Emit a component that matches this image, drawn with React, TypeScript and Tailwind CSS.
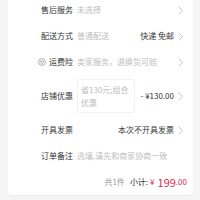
import React from 'react';

const Chevron: React.FC = () => (
    <svg width="6" height="9" viewBox="0 0 6 9" className="shrink-0">
        <path d="M1 1 L4.5 4.5 L1 8" fill="none" stroke="#c8c8c8" strokeWidth="1" strokeLinecap="round" strokeLinejoin="round" />
    </svg>
);

const ShieldIcon: React.FC = () => (
    <svg width="8" height="8" viewBox="0 0 8 8" className="inline-block align-[-1px] mr-[3px]">
        <circle cx="4" cy="4" r="3.4" fill="none" stroke="#9a9a9a" strokeWidth="0.8" />
        <path d="M2.4 3.2 Q4 2.6 5.6 3.2 Q5.4 5.2 4 5.8 Q2.6 5.2 2.4 3.2 Z" fill="none" stroke="#9a9a9a" strokeWidth="0.7" />
    </svg>
);

interface RowProps {
    label: React.ReactNode;
    value?: React.ReactNode;
    right?: React.ReactNode;
    arrow?: boolean;
    className: string;
}

const Row: React.FC<RowProps> = ({ label, value, right, arrow = true, className }) => (
    <div className={`flex items-center pr-[9px] ${className}`}>
        <div className="w-[65px] shrink-0 text-right text-[#333] whitespace-nowrap">{label}</div>
        <div className="flex-1 min-w-0 ml-[4px] text-[#bdbdbd] whitespace-nowrap">{value}</div>
        {right && <div className="text-[#333] whitespace-nowrap mr-[4px]">{right}</div>}
        {arrow ? <Chevron /> : <div className="w-[6px]" />}
    </div>
);

export default function App() {
    return (
        <div
            className="w-[200px] h-[200px] bg-[#f5f5f5] overflow-hidden text-[8px] leading-[10px]"
            style={{ fontFamily: '"Noto Sans CJK SC", "Noto Sans", sans-serif' }}
        >
            <div className="ml-[8px] w-[185px] h-[195px] bg-white rounded-b-[4px] shadow-[0_1px_1px_rgba(0,0,0,0.04)] flex flex-col">
                <Row className="h-[23px] pb-[3px]" label="售后服务" value="未选择" />
                <Row className="h-[26px]" label="配送方式" value="普通配送" right="快递 免邮" />
                <Row
                    className="h-[26px]"
                    label={<><ShieldIcon />运费险</>}
                    value="卖家服务，退换货可赔"
                />
                <Row
                    className="h-[42px]"
                    label="店铺优惠"
                    value={
                        <div className="w-[58px] border border-[#f2f2f2] rounded-[2px] pl-[3px] py-[3px] leading-[13px]">
                            <div className="whitespace-nowrap">省130元;组合</div>
                            <div>优惠</div>
                        </div>
                    }
                    right="- ¥130.00"
                />
                <Row className="h-[26px]" label="开具发票" right="本次不开具发票" />
                <Row className="h-[26px]" label="订单备注" value="选填,请先和商家协商一致" arrow={false} />
                <div className="h-[26px] flex items-center justify-end pr-[6px] whitespace-nowrap">
                    <span className="text-[#999]">共1件</span>
                    <span className="text-[#333] ml-[5px]">小计:</span>
                    <span className="text-[#e0284f] ml-[2px]">¥</span>
                    <span className="text-[#e0284f] text-[11px] ml-[3px]">199</span>
                    <span className="text-[#e0284f] text-[8px]">.00</span>
                </div>
            </div>
        </div>
    );
}
